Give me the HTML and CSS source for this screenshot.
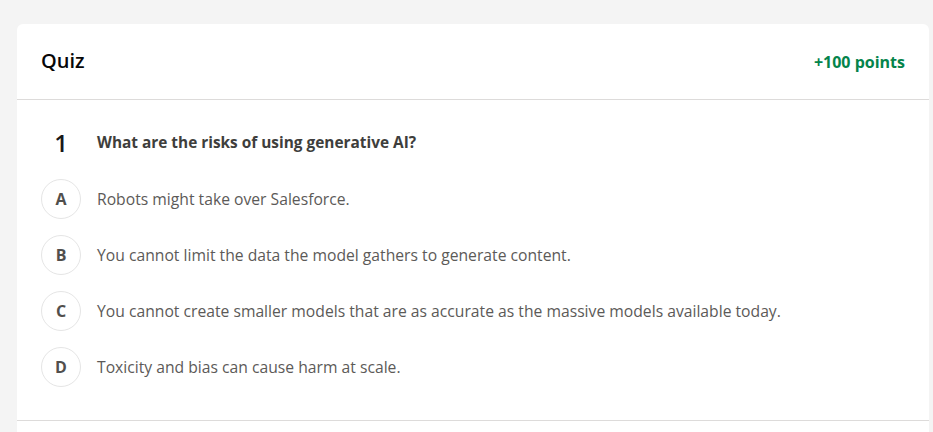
FILE: index.html
```html
<!DOCTYPE html>
<html>
<head>
<meta charset="utf-8">
<link rel="stylesheet" href="styles.css">
</head>
<body>
<div class="card">
  <div class="card-header">
    <h2 class="title">Quiz</h2>
    <span class="points">+100 points</span>
  </div>
  <div class="card-body">
    <div class="question">
      <span class="qnum">1</span>
      <span class="qtext">What are the risks of using generative AI?</span>
    </div>
    <ul class="options">
      <li class="option"><span class="letter">A</span><span class="otext">Robots might take over Salesforce.</span></li>
      <li class="option"><span class="letter">B</span><span class="otext">You cannot limit the data the model gathers to generate content.</span></li>
      <li class="option"><span class="letter">C</span><span class="otext">You cannot create smaller models that are as accurate as the massive models available today.</span></li>
      <li class="option"><span class="letter">D</span><span class="otext">Toxicity and bias can cause harm at scale.</span></li>
    </ul>
  </div>
  <div class="card-footer"></div>
</div>
</body>
</html>
```
FILE: styles.css
```css
html, body {
  margin: 0;
  padding: 0;
  background: #f4f4f4;
}
body {
  padding: 24px 4px 0 17px;
  font-family: "Open Sans", "Noto Sans", sans-serif;
}
.card {
  background: #ffffff;
  border-radius: 6px 6px 0 0;
}
.card-header {
  height: 75px;
  border-bottom: 1px solid #dddbda;
  display: flex;
  align-items: center;
  justify-content: space-between;
  padding: 0 24px;
}
.title {
  margin: 0;
  font-size: 20px;
  font-weight: 600;
  color: #080707;
  padding-bottom: 2px;
}
.points {
  font-size: 16px;
  font-weight: 700;
  color: #04844b;
}
.card-body {
  padding: 31px 24px 33px 24px;
  border-bottom: 1px solid #dddbda;
}
.question {
  display: flex;
  align-items: center;
  height: 24px;
  gap: 16px;
}
.qnum {
  width: 40px;
  text-align: center;
  font-size: 24px;
  font-weight: 600;
  color: #181818;
  line-height: 24px;
}
.qtext {
  font-size: 15.4px;
  font-weight: 700;
  color: #3e3e3c;
  padding-bottom: 2px;
}
.options {
  list-style: none;
  margin: 24px 0 0 0;
  padding: 0;
  display: flex;
  flex-direction: column;
  gap: 16px;
}
.option {
  display: flex;
  align-items: center;
  gap: 16px;
  height: 40px;
}
.letter {
  width: 38px;
  height: 38px;
  border: 1px solid #e5e5e5;
  border-radius: 50%;
  display: flex;
  align-items: center;
  justify-content: center;
  font-size: 16px;
  font-weight: 700;
  color: #514f4d;
  flex: none;
}
.otext {
  font-size: 15.7px;
  color: #5c5a58;
}
.card-footer {
  height: 11px;
}
```
